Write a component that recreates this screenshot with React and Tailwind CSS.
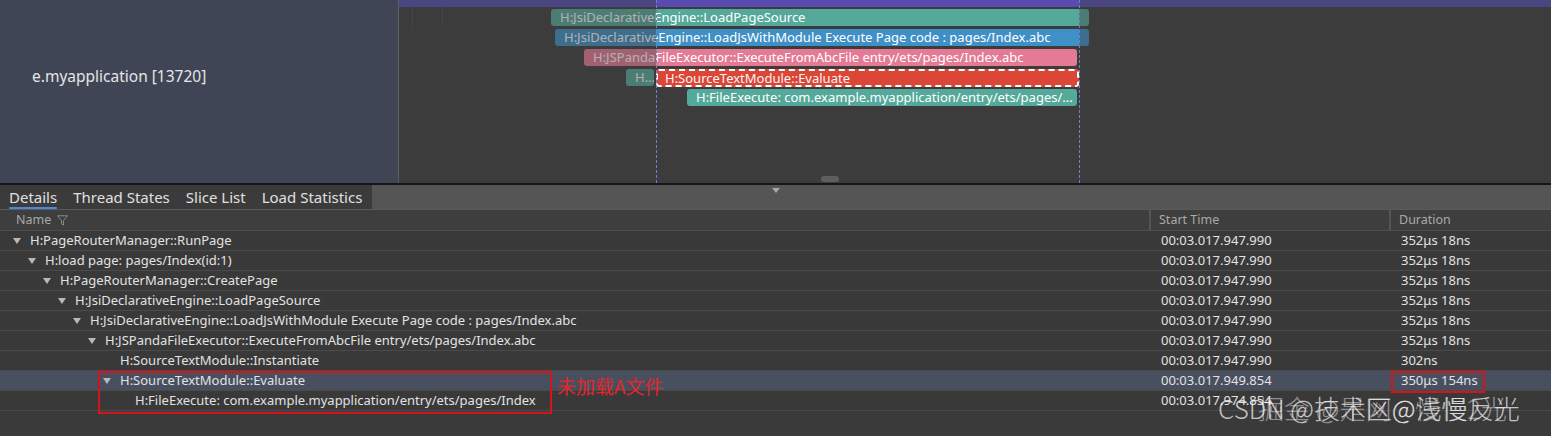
import React from "react";

const rows = [
  { lvl: 0, tri: true, name: "H:PageRouterManager::RunPage", start: "00:03.017.947.990", dur: "352μs 18ns" },
  { lvl: 1, tri: true, name: "H:load page: pages/Index(id:1)", start: "00:03.017.947.990", dur: "352μs 18ns" },
  { lvl: 2, tri: true, name: "H:PageRouterManager::CreatePage", start: "00:03.017.947.990", dur: "352μs 18ns" },
  { lvl: 3, tri: true, name: "H:JsiDeclarativeEngine::LoadPageSource", start: "00:03.017.947.990", dur: "352μs 18ns" },
  { lvl: 4, tri: true, name: "H:JsiDeclarativeEngine::LoadJsWithModule Execute Page code : pages/Index.abc", start: "00:03.017.947.990", dur: "352μs 18ns" },
  { lvl: 5, tri: true, name: "H:JSPandaFileExecutor::ExecuteFromAbcFile entry/ets/pages/Index.abc", start: "00:03.017.947.990", dur: "352μs 18ns" },
  { lvl: 6, tri: false, name: "H:SourceTextModule::Instantiate", start: "00:03.017.947.990", dur: "302ns" },
  { lvl: 6, tri: true, name: "H:SourceTextModule::Evaluate", start: "00:03.017.949.854", dur: "350μs 154ns", sel: true },
  { lvl: 7, tri: false, name: "H:FileExecute: com.example.myapplication/entry/ets/pages/Index", start: "00:03.017.974.854", dur: "" },
];

const bars = [
  { top: 9, left: 552, width: 538, color: "bg-[#55a99b]", text: "H:JsiDeclarativeEngine::LoadPageSource" },
  { top: 29, left: 556, width: 534, color: "bg-[#3f90c6]", text: "H:JsiDeclarativeEngine::LoadJsWithModule Execute Page code : pages/Index.abc" },
  { top: 49, left: 585, width: 493, color: "bg-[#e47a94]", text: "H:JSPandaFileExecutor::ExecuteFromAbcFile entry/ets/pages/Index.abc" },
  { top: 69, left: 627, width: 28, color: "bg-[#55a99b]", text: "H..." },
  { top: 89, left: 688, width: 390, color: "bg-[#55a99b]", text: "H:FileExecute: com.example.myapplication/entry/ets/pages/..." },
];

function Tri() {
  return (
    <svg width="8" height="6" viewBox="0 0 8 6" className="shrink-0">
      <path d="M0 0 L8 0 L4 6 Z" fill="#b8b8b8" />
    </svg>
  );
}

export default function App() {
  const font = { fontFamily: '"Noto Sans", "Noto Sans CJK SC", sans-serif' };
  const cjk = { fontFamily: '"Noto Sans CJK SC", sans-serif' };
  return (
    <div className="w-[1551px] h-[436px] overflow-hidden bg-[#3a3a3a] flex flex-col" style={font}>
      {/* Top timeline */}
      <div className="h-[183px] flex shrink-0">
        <div className="w-[399px] bg-[#3f4555] flex items-center pl-[32px] border-r border-[#5c5f66]">
          <span className="text-[15.5px] text-[#e6e6e6] mb-[30px]">e.myapplication [13720]</span>
        </div>
        <div className="flex-1 bg-[#3c3c3c] relative">
          <div className="h-[7px] bg-[#4b4582]"></div>
          <div className="absolute top-0 left-[257px] w-[423px] h-[7px] bg-[#5a4bb0]"></div>
          <div className="absolute top-[7px] left-[13px] w-px h-[20px] bg-[#4a4a55]"></div>
          <div className="absolute top-[7px] left-[43px] w-px h-[20px] bg-[#4a4a55]"></div>
          {bars.map((b, i) => (
            <div
              key={i}
              className={`absolute h-[17px] rounded-[3px] ${b.color} text-white text-[13px] leading-[17px] pl-[9px] whitespace-nowrap overflow-hidden`}
              style={{ top: b.top, left: b.left - 400, width: b.width }}
            >
              {b.text}
            </div>
          ))}
          <div className="absolute top-[69px] left-[257px] w-[423px] h-[18px] bg-[#dc4637] border-2 border-dashed border-white rounded-[3px] text-[#f5f5f5] text-[13px] leading-[14px] pl-[7px] whitespace-nowrap">
            H:SourceTextModule::Evaluate
          </div>
          {/* dim overlays outside selection */}
          <div className="absolute top-[7px] bottom-0 left-0 w-[257px] bg-[#3c3c3c]/40"></div>
          <div className="absolute top-[7px] bottom-0 left-[680px] right-0 bg-[#3c3c3c]/40"></div>
          <div className="absolute top-0 bottom-0 left-[257px] border-l border-dashed border-[#6d7fd0]"></div>
          <div className="absolute top-0 bottom-0 left-[680px] border-l border-dashed border-[#6d7fd0]"></div>
          <div className="absolute bottom-[1px] left-[422px] w-[18px] h-[6px] rounded-[3px] bg-[#5e5e5e]"></div>
        </div>
      </div>
      <div className="h-[2px] bg-[#161616] shrink-0"></div>
      {/* Bottom panel */}
      <div className="flex-1 flex flex-col bg-[#3a3a3a] relative">
        <div className="h-[25px] flex items-stretch border-b border-[#5a5a5a] shrink-0">
          <div className="flex items-stretch gap-[16px] pl-[9px] pr-[10px] bg-[#3b3b3b]">
            {["Details", "Thread States", "Slice List", "Load Statistics"].map((t, i) => (
              <div key={t} className="relative flex items-center text-[15px] text-[#e0e0e0]">
                {t}
                {i === 0 && <div className="absolute left-0 right-0 bottom-0 h-[2px] bg-[#4f86e0] rounded"></div>}
              </div>
            ))}
          </div>
          <div className="flex-1 bg-[#555555] relative">
            <svg width="8" height="5" viewBox="0 0 8 5" className="absolute top-[3px] left-[400px]">
              <path d="M0 0 L8 0 L4 5 Z" fill="#a8a8a8" />
            </svg>
          </div>
        </div>
        {/* Header */}
        <div className="h-[21px] flex text-[12.5px] text-[#a9a9a9] bg-[#3e3e3e] border-b border-[#4e4e4e] shrink-0">
          <div className="w-[1151px] flex items-center pl-[16px] gap-[6px] border-r-2 border-[#555]">
            <span>Name</span>
            <svg width="11" height="11" viewBox="0 0 11 11">
              <path d="M0.5 0.8 H10.5 L6.5 5.5 V10 L4.5 9 V5.5 Z" fill="none" stroke="#8a8a8a" strokeWidth="1" />
            </svg>
          </div>
          <div className="w-[240px] flex items-center pl-[8px] border-r-2 border-[#555]">Start Time</div>
          <div className="flex-1 flex items-center pl-[8px]">Duration</div>
        </div>
        {rows.map((r, i) => (
          <div
            key={i}
            className={`h-[20px] flex text-[13px] text-[#e2e2e2] border-b border-[#4a4a4a] shrink-0 ${r.sel ? "bg-[#485060]" : "bg-[#393939]"}`}
          >
            <div className="w-[1151px] flex items-center" style={{ paddingLeft: 13 + r.lvl * 15 }}>
              <span className="w-[17px] flex items-center">{r.tri ? <Tri /> : null}</span>
              <span className="whitespace-nowrap">{r.name}</span>
            </div>
            <div className="w-[240px] flex items-center pl-[10px]">{r.start}</div>
            <div className="flex-1 flex items-center pl-[10px]">{r.dur}</div>
          </div>
        ))}
        {/* annotations */}
        <div className="absolute left-[98px] top-[186px] w-[454px] h-[43px] border-2 border-[#d3141c]"></div>
        <div className="absolute left-[557px] top-[190px] text-[19px] text-[#e0262a] leading-[22px]" style={cjk}>
          未加载A文件
        </div>
        <div className="absolute left-[1391px] top-[186px] w-[94px] h-[22px] border-2 border-[#d3141c]"></div>
        {/* watermark */}
        <div className="absolute left-[1218px] top-[207px] text-[26px] leading-[32px] text-white/70 whitespace-nowrap" style={{ ...cjk, fontWeight: 300 }}>
          CSDN @技术区@浅慢反光
        </div>
        <div className="absolute left-[1258px] top-[207px] text-[26px] leading-[32px] text-white/45 whitespace-nowrap" style={{ ...cjk, fontWeight: 300 }}>
          掘金 @是网@慢慢2光
        </div>
      </div>
    </div>
  );
}
